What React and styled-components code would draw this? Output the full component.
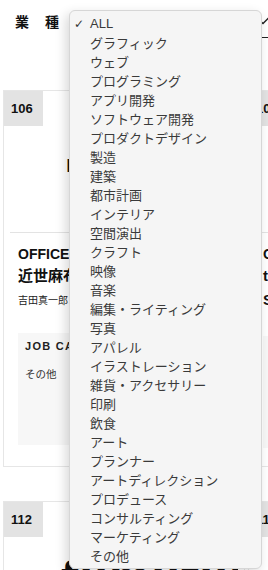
import React from 'react';
import styled, { createGlobalStyle } from 'styled-components';

const GlobalStyle = createGlobalStyle`
    html, body {
        margin: 0;
        padding: 0;
        overflow: hidden;
        background: #ffffff;
    }
    body {
        font-family: "Liberation Sans", "Noto Sans CJK JP", sans-serif;
        color: #111111;
    }
`;

const jp = `"Liberation Sans", "Noto Sans CJK JP", sans-serif`;

const Page = styled.div`
    position: relative;
    width: 268px;
    height: 570px;
    overflow: hidden;
`;

const Header = styled.header`
    display: flex;
    align-items: flex-start;
    height: 90px;
    padding: 13px 0 0 15px;
    box-sizing: border-box;
`;

const Label = styled.div`
    font-family: ${jp};
    font-size: 14px;
    font-weight: 700;
    line-height: 18px;
    letter-spacing: 16px;
    white-space: nowrap;
    width: 54px;
`;

const Select = styled.div`
    position: relative;
    flex: none;
    width: 210px;
    height: 24px;
    border-bottom: 1px solid #222222;
    svg {
        position: absolute;
        left: 187px;
        top: 3px;
    }
`;

const Grid = styled.div`
    display: grid;
    grid-template-columns: 242px 242px;
    column-gap: 3px;
    row-gap: 34px;
    padding-left: 3px;
`;

const Card = styled.div`
    border: 1px solid #e6e6e6;
    box-sizing: border-box;
    height: 377px;
    background: #ffffff;
`;

const Badge = styled.div`
    width: 39px;
    height: 35px;
    background: #e3e3e3;
    font-size: 13px;
    font-weight: 700;
    line-height: 35px;
    padding-left: 7px;
    box-sizing: border-box;
    color: #111111;
`;

const ImageBox = styled.div`
    height: 107px;
    margin: 0 6px;
    border-bottom: 1px solid #e3e3e3;
    box-sizing: border-box;
    display: flex;
    align-items: flex-start;
    padding-top: ${(p) => p.$top}px;
    padding-left: ${(p) => p.$left}px;
    overflow: hidden;
`;

const Logo = styled.div`
    font-family: "DejaVu Sans", sans-serif;
    font-size: ${(p) => p.$size}px;
    font-weight: 700;
    line-height: 1;
    letter-spacing: 1px;
    color: #111111;
    white-space: nowrap;
`;

const Body = styled.div`
    padding: 12px 14px 0 14px;
`;

const Office = styled.div`
    font-size: 14px;
    font-weight: 700;
    line-height: 18px;
`;

const Title = styled.div`
    font-family: ${jp};
    font-size: 15px;
    font-weight: 700;
    line-height: 22px;
    margin-top: 2px;
    white-space: nowrap;
`;

const Person = styled.div`
    font-family: ${jp};
    font-size: 10px;
    line-height: 14px;
    margin-top: 7px;
    color: #222222;
    white-space: nowrap;
`;

const JobBox = styled.div`
    margin-top: 25px;
    height: 112px;
    background: #f7f7f7;
    padding: 6px 7px;
    box-sizing: border-box;
`;

const JobHead = styled.div`
    font-size: 11px;
    font-weight: 700;
    letter-spacing: 1.3px;
    line-height: 14px;
    color: #222222;
    white-space: nowrap;
`;

const JobValue = styled.div`
    font-family: ${jp};
    font-size: 10.5px;
    line-height: 14px;
    margin-top: 14px;
    color: #333333;
`;

const Menu = styled.ul`
    position: absolute;
    z-index: 10;
    top: 10px;
    left: 69px;
    width: 193px;
    margin: 0;
    padding: 3px 0;
    list-style: none;
    background: #f5f5f5;
    border: 1px solid #d6d6d6;
    border-radius: 6px;
    box-shadow: -3px 4px 12px rgba(0, 0, 0, 0.16);
    box-sizing: border-box;
`;

const Item = styled.li`
    display: flex;
    align-items: center;
    height: 19px;
    padding-left: 4px;
    font-family: ${jp};
    font-size: 13px;
    color: #3a3a3a;
    white-space: nowrap;
`;

const Check = styled.span`
    width: 16px;
    flex: none;
    font-family: "DejaVu Sans", sans-serif;
    font-size: 12px;
    color: #333333;
`;

const categories = [
    'ALL',
    'グラフィック',
    'ウェブ',
    'プログラミング',
    'アプリ開発',
    'ソフトウェア開発',
    'プロダクトデザイン',
    '製造',
    '建築',
    '都市計画',
    'インテリア',
    '空間演出',
    'クラフト',
    '映像',
    '音楽',
    '編集・ライティング',
    '写真',
    'アパレル',
    'イラストレーション',
    '雑貨・アクセサリー',
    '印刷',
    '飲食',
    'アート',
    'プランナー',
    'アートディレクション',
    'プロデュース',
    'コンサルティング',
    'マーケティング',
    'その他',
];

const offices = [
    {
        no: '106',
        logo: 'NOMAD',
        logoSize: 17,
        top: 32,
        left: 56,
        office: 'OFFICE KOSEI',
        title: ['近世麻布十番'],
        person: '吉田真一郎 / ディレクター',
        job: 'その他',
    },
    {
        no: '107',
        logo: 'STUDIO',
        logoSize: 17,
        top: 32,
        left: 60,
        office: 'OFFICE TONE',
        title: ['tone design', 'Studio'],
        person: '',
        job: 'グラフィック',
    },
    {
        no: '112',
        logo: 'fumufumu',
        logoSize: 40,
        top: 20,
        left: 51,
        office: 'OFFICE FUMU',
        title: ['ふむふむ舎'],
        person: '山本 花子',
        job: 'ウェブ',
    },
    {
        no: '113',
        logo: 'KAKU',
        logoSize: 30,
        top: 20,
        left: 60,
        office: 'OFFICE KAKU',
        title: ['角デザイン室'],
        person: '',
        job: '建築',
    },
];

const Chevron = () => (
    <svg width="14" height="9" viewBox="0 0 14 9">
        <path d="M1 2 L7 7.5 L13 1.5" fill="none" stroke="#222" strokeWidth="1.4" />
    </svg>
);

const OfficeCard = ({ data }) => (
    <Card>
        <Badge>{data.no}</Badge>
        <ImageBox $top={data.top} $left={data.left}>
            <Logo $size={data.logoSize}>{data.logo}</Logo>
        </ImageBox>
        <Body>
            <Office>{data.office}</Office>
            {data.title.map((line, i) => (
                <Title key={i}>{line}</Title>
            ))}
            {data.person && <Person>{data.person}</Person>}
            <JobBox>
                <JobHead>JOB CATEGORY</JobHead>
                <JobValue>{data.job}</JobValue>
            </JobBox>
        </Body>
    </Card>
);

const App = () => {
    return (
        <Page>
            <GlobalStyle />
            <Header>
                <Label>業種</Label>
                <Select>
                    <Chevron />
                </Select>
            </Header>
            <Grid>
                {offices.map((o) => (
                    <OfficeCard key={o.no} data={o} />
                ))}
            </Grid>
            <Menu>
                {categories.map((c, i) => (
                    <Item key={c}>
                        <Check>{i === 0 ? '✓' : ''}</Check>
                        {c}
                    </Item>
                ))}
            </Menu>
        </Page>
    );
};

export default App;
